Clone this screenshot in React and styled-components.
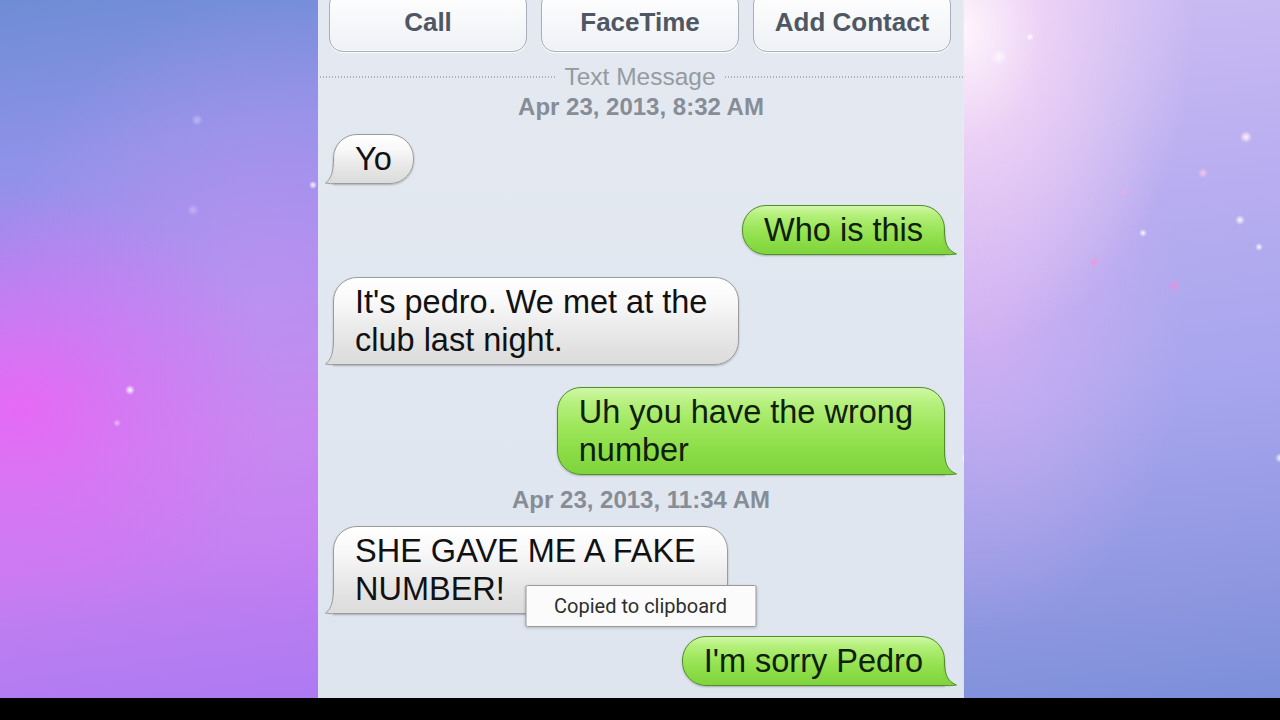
import React from "react";
import styled, { createGlobalStyle, css } from "styled-components";

const GlobalStyle = createGlobalStyle`
  html, body { margin: 0; padding: 0; background: #000; }
  body { font-family: "Liberation Sans", Arial, sans-serif; }
  * { box-sizing: border-box; }
`;

const Screen = styled.div`
  width: 1280px;
  height: 720px;
  display: grid;
  grid-template-rows: 698px 22px;
  overflow: hidden;
  background: #000;
`;

const Stage = styled.div`
  display: grid;
  grid-template-columns: 318px 645px 1fr;
  min-height: 0;
`;

const leftBg = css`
  background:
    radial-gradient(circle at 130px 390px, rgba(255,255,255,0.95) 0, rgba(255,255,255,0.6) 2px, rgba(255,255,255,0) 5px),
    radial-gradient(circle at 313px 185px, rgba(255,255,255,0.9) 0, rgba(255,255,255,0.5) 2px, rgba(255,255,255,0) 4px),
    radial-gradient(circle at 117px 423px, rgba(255,255,255,0.5) 0, rgba(255,255,255,0) 4px),
    radial-gradient(circle at 197px 120px, rgba(255,255,255,0.35) 0, rgba(255,255,255,0) 6px),
    radial-gradient(circle at 193px 210px, rgba(255,255,255,0.3) 0, rgba(255,255,255,0) 6px),
    radial-gradient(ellipse 260px 220px at 20px 410px, rgba(232,104,246,0.95) 0%, rgba(226,110,244,0.55) 45%, rgba(220,120,240,0) 100%),
    radial-gradient(ellipse 260px 300px at 260px 300px, rgba(200,150,240,0.55) 0%, rgba(200,150,240,0) 100%),
    linear-gradient(172deg, #6e8dd5 0%, #8f92e8 22%, #a68cf0 42%, #c584f1 62%, #c47ff1 78%, #ad7af2 100%);
`;

const rightBg = css`
  background:
    radial-gradient(circle at 282px 137px, rgba(255,240,250,1) 0, rgba(255,230,245,0.6) 3px, rgba(255,230,245,0) 6px),
    radial-gradient(circle at 239px 173px, rgba(255,200,235,0.9) 0, rgba(255,200,235,0) 5px),
    radial-gradient(circle at 179px 233px, rgba(255,255,255,0.95) 0, rgba(255,255,255,0) 4px),
    radial-gradient(circle at 276px 220px, rgba(255,255,255,0.9) 0, rgba(255,255,255,0) 5px),
    radial-gradient(circle at 295px 247px, rgba(255,255,255,0.9) 0, rgba(255,255,255,0) 4px),
    radial-gradient(circle at 130px 262px, rgba(240,150,220,0.9) 0, rgba(240,150,220,0) 5px),
    radial-gradient(circle at 210px 286px, rgba(240,140,215,0.8) 0, rgba(240,140,215,0) 6px),
    radial-gradient(circle at 161px 192px, rgba(240,170,225,0.8) 0, rgba(240,170,225,0) 4px),
    radial-gradient(circle at 316px 458px, rgba(255,255,255,0.9) 0, rgba(255,255,255,0) 5px),
    radial-gradient(circle at 66px 37px, rgba(255,255,255,0.9) 0, rgba(255,255,255,0) 4px),
    radial-gradient(circle at 35px 57px, rgba(255,255,255,0.7) 0, rgba(255,255,255,0) 8px),
    radial-gradient(ellipse 230px 320px at 0px 30px, rgba(255,245,252,1) 0%, rgba(244,215,246,0.8) 35%, rgba(225,190,243,0) 100%),
    radial-gradient(ellipse 200px 300px at 20px 330px, rgba(230,180,245,0.6) 0%, rgba(230,180,245,0) 100%),
    linear-gradient(172deg, #cbbcf3 0%, #b8adf0 30%, #a8a6ee 55%, #9299e2 80%, #7c8fd9 100%);
`;

const SidePanel = styled.div`
  ${(p) => (p.$side === "left" ? leftBg : rightBg)}
  ${(p) =>
    p.$side === "right" &&
    css`
      border-left: 1px solid rgba(255, 255, 255, 0.7);
    `}
`;

const Phone = styled.div`
  position: relative;
  display: flex;
  flex-direction: column;
  padding: 0 6px 0 7px;
  background: linear-gradient(180deg, #e4e9f1 0%, #e1e7f0 50%, #dfe5ee 100%);
  overflow: hidden;
  font-family: "Liberation Sans", Arial, sans-serif;
`;

const ButtonRow = styled.div`
  display: grid;
  grid-template-columns: repeat(3, 198px);
  gap: 14px;
  margin: -10px 0 0 4px;
`;

const ActionButton = styled.div`
  height: 62px;
  display: flex;
  align-items: center;
  justify-content: center;
  padding-top: 2px;
  border: 1px solid #a9afb8;
  border-radius: 14px;
  background: linear-gradient(180deg, #ffffff 0%, #f7f8fa 50%, #eef1f5 100%);
  box-shadow: 0 1px 0 rgba(255, 255, 255, 0.9), inset 0 -1px 0 rgba(255, 255, 255, 0.6);
  color: #4f5764;
  font-weight: bold;
  font-size: 26px;
`;

const Divider = styled.div`
  display: flex;
  align-items: center;
  gap: 9px;
  height: 20px;
  margin: 15px -6px 0 -8px;
  color: #959aa1;
  font-size: 24.5px;
`;

const DotLine = styled.span`
  flex: 1;
  height: 2px;
  background: repeating-linear-gradient(90deg, #aeb3ba 0 1px, transparent 1px 3px);
`;

const DateLabel = styled.div`
  height: 20px;
  line-height: 20px;
  margin-top: ${(p) => p.$mt}px;
  text-align: center;
  color: #878d96;
  font-size: 24px;
  font-weight: bold;
`;

const Row = styled.div`
  display: flex;
  justify-content: ${(p) => (p.$out ? "flex-end" : "flex-start")};
  margin-top: ${(p) => p.$mt}px;
`;

const BubbleWrap = styled.div`
  position: relative;
  padding-left: ${(p) => (p.$out ? 0 : 8)}px;
  padding-right: ${(p) => (p.$out ? 12 : 0)}px;
`;

const greyBody = css`
  background: linear-gradient(180deg, #ffffff 0%, #f8f8f8 30%, #ececec 55%, #e2e2e2 80%, #dcdcdc 100%);
  border: 1px solid #9c9c9c;
  color: #111;
  border-bottom-left-radius: 0;
`;

const greenBody = css`
  background: linear-gradient(180deg, #d0f7a6 0%, #b5f07c 18%, #9ee65c 45%, #8cdd47 72%, #80d43c 100%);
  border: 1px solid #4f8f2c;
  color: #0f200a;
  border-bottom-right-radius: 0;
`;

const BubbleBody = styled.div`
  position: relative;
  padding: 5px ${(p) => (p.$multi ? 31 : 21)}px 5px 21px;
  border-radius: 24px;
  font-size: 32.5px;
  line-height: 38px;
  white-space: nowrap;
  box-shadow: 0 1px 2px rgba(0, 0, 0, 0.25);
  ${(p) => (p.$out ? greenBody : greyBody)}
`;

const TailSvg = styled.svg`
  position: absolute;
  bottom: 0;
  ${(p) =>
    p.$out
      ? css`
          right: 0;
          transform: scaleX(-1);
        `
      : css`
          left: 0;
        `}
  overflow: visible;
`;

function Tail({ out }) {
  const T = out ? 12 : 8;
  const w = T + 18;
  const outer = `M ${T + 0.5} 4 C ${T + 0.5} 18 ${T - 2} 25 0.5 29 Q ${T * 0.6} 30.2 ${T + 3} 29.5 L ${T + 16} 29.5`;
  const fill = `${outer} L ${T + 16} 28.5 L ${T + 2} 28.5 L ${T + 2} 4 Z`;
  const id = out ? "tailGreen" : "tailGrey";
  return (
    <TailSvg $out={out} width={w} height={30} viewBox={`0 0 ${w} 30`}>
      <defs>
        <linearGradient id={id} x1="0" y1="0" x2="0" y2="1">
          {out ? (
            <>
              <stop offset="0" stopColor="#8ddd48" />
              <stop offset="1" stopColor="#7fd33b" />
            </>
          ) : (
            <>
              <stop offset="0" stopColor="#e6e6e6" />
              <stop offset="1" stopColor="#dbdbdb" />
            </>
          )}
        </linearGradient>
      </defs>
      <path d={fill} fill={`url(#${id})`} />
      <path d={outer} fill="none" stroke={out ? "#4f8f2c" : "#9c9c9c"} strokeWidth="1" />
    </TailSvg>
  );
}

function Bubble({ out, lines, mt }) {
  return (
    <Row $out={out} $mt={mt}>
      <BubbleWrap $out={out}>
        <BubbleBody $out={out} $multi={lines.length > 1}>
          {lines.map((l, i) => (
            <React.Fragment key={i}>
              {i > 0 && <br />}
              {l}
            </React.Fragment>
          ))}
        </BubbleBody>
        <Tail out={out} />
      </BubbleWrap>
    </Row>
  );
}

const Toast = styled.div`
  position: absolute;
  top: 585px;
  left: 50%;
  transform: translateX(-50%);
  width: 231px;
  height: 42px;
  display: flex;
  align-items: center;
  justify-content: center;
  background: #fbfbfb;
  border: 1px solid #9a9a9a;
  border-radius: 2px;
  box-shadow: 0 1px 3px rgba(0, 0, 0, 0.2);
  color: #2e2e2e;
  font-family: Roboto, "Noto Sans", sans-serif;
  font-size: 20px;
`;

const BottomBar = styled.div`
  background: #000;
`;

export default function App() {
  return (
    <>
      <GlobalStyle />
      <Screen>
        <Stage>
          <SidePanel $side="left" />
          <Phone>
            <ButtonRow>
              <ActionButton>Call</ActionButton>
              <ActionButton>FaceTime</ActionButton>
              <ActionButton>Add Contact</ActionButton>
            </ButtonRow>
            <Divider>
              <DotLine />
              <span>Text Message</span>
              <DotLine />
            </Divider>
            <DateLabel $mt={10}>Apr 23, 2013, 8:32 AM</DateLabel>
            <Bubble mt={17} lines={["Yo"]} />
            <Bubble out mt={21} lines={["Who is this"]} />
            <Bubble mt={22} lines={["It's pedro. We met at the", "club last night."]} />
            <Bubble out mt={22} lines={["Uh you have the wrong", "number"]} />
            <DateLabel $mt={15}>Apr 23, 2013, 11:34 AM</DateLabel>
            <Bubble mt={16} lines={["SHE GAVE ME A FAKE", "NUMBER!"]} />
            <Bubble out mt={22} lines={["I'm sorry Pedro"]} />
            <Toast>Copied to clipboard</Toast>
          </Phone>
          <SidePanel $side="right" />
        </Stage>
        <BottomBar />
      </Screen>
    </>
  );
}
